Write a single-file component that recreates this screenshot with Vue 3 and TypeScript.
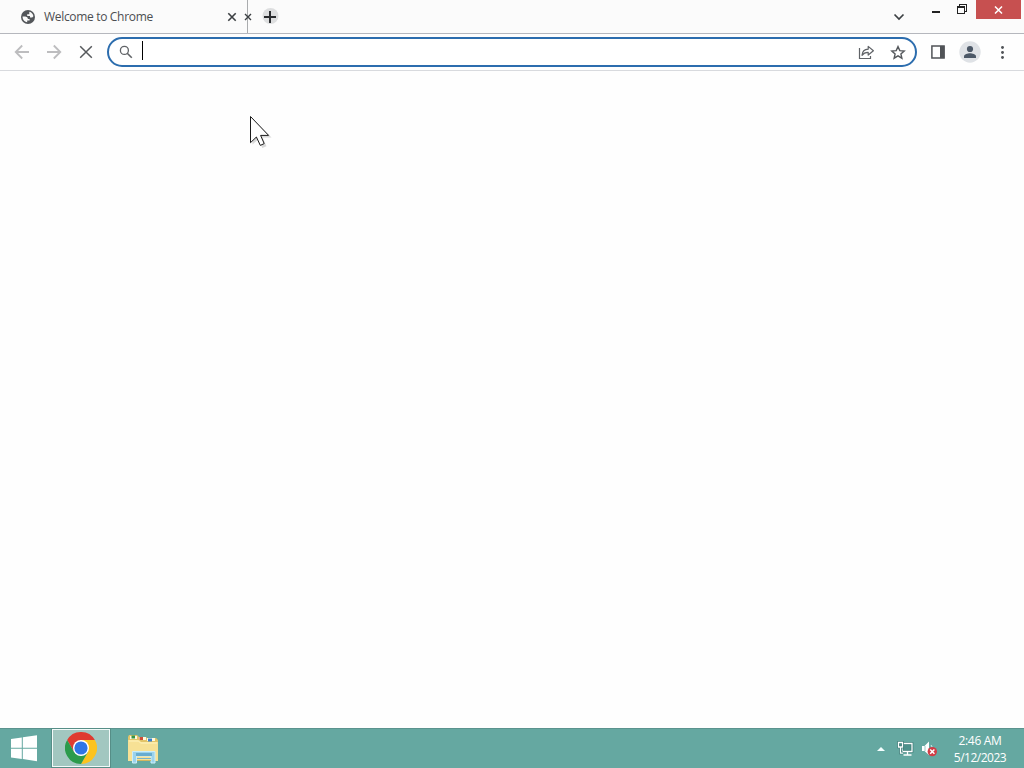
<script setup lang="ts">
import { ref } from 'vue'

const address = ref('')
const tabTitle = 'Welcome to Chrome'
const time = '2:46 AM'
const date = '5/12/2023'
</script>

<template>
  <div class="desktop">
    <header class="tabstrip">
      <div class="tab">
        <svg class="globe" width="14" height="14" viewBox="0 0 14 14">
          <circle cx="7" cy="7" r="7" fill="#53565a" />
          <path d="M1.6 6.6H4.3Q6.8 6.8 7 9H8.6V10.4H6.2V12.3C3.3 12 1.4 9.6 1.6 6.6Z" fill="#fafafa" />
          <path d="M8.3 1.7C10.6 2.2 12.2 4 12.4 6.3L11.2 7.6H9V6H6.2V4.2H8.3Z" fill="#fafafa" />
        </svg>
        <span class="title">{{ tabTitle }}</span>
        <svg class="close" width="10" height="10" viewBox="0 0 10 10">
          <path d="M1.3 1.3 8.7 8.7M8.7 1.3 1.3 8.7" stroke="#3c4043" stroke-width="1.6" />
        </svg>
      </div>
      <div class="divider">
        <svg class="close-small" width="8" height="8" viewBox="0 0 8 8">
          <path d="M1 1 7 7M7 1 1 7" stroke="#3c4043" stroke-width="1.4" />
        </svg>
      </div>
      <div class="newtab">
        <svg width="17" height="17" viewBox="0 0 17 17">
          <circle cx="8.5" cy="8" r="8" fill="#dddedf" />
          <path d="M2 9H14M8 3V15" stroke="#292b2e" stroke-width="2" />
        </svg>
      </div>
      <svg class="chevron" width="12" height="8" viewBox="0 0 12 8">
        <path d="M1.5 1.5 6 6 10.5 1.5" fill="none" stroke="#3c4043" stroke-width="1.7" />
      </svg>
      <div class="minimize"></div>
      <svg class="restore" width="10" height="10" viewBox="0 0 10 10" shape-rendering="crispEdges">
        <path d="M2 0H10V8H8V7H9V1H3V2H2Z" fill="#222" />
        <path fill-rule="evenodd" d="M0 2H8V10H0ZM1 4V9H7V4Z" fill="#222" />
      </svg>
      <div class="window-close">
        <svg width="9" height="8" viewBox="0 0 9 8">
          <path d="M1 .5 8 7.5M8 .5 1 7.5" stroke="#fff" stroke-width="1.5" />
        </svg>
      </div>
    </header>

    <nav class="toolbar">
      <svg class="back" width="16" height="16" viewBox="0 0 16 16">
        <path d="M15 8H2M8.2 1.5 1.7 8 8.2 14.5" fill="none" stroke="#bdbdbf" stroke-width="1.8" />
      </svg>
      <svg class="forward" width="16" height="16" viewBox="0 0 16 16">
        <path d="M1 8H14M7.8 1.5 14.3 8 7.8 14.5" fill="none" stroke="#bdbdbf" stroke-width="1.8" />
      </svg>
      <svg class="stop" width="14" height="14" viewBox="0 0 14 14">
        <path d="M1.2 1.2 12.8 12.8M12.8 1.2 1.2 12.8" stroke="#56595c" stroke-width="1.5" />
      </svg>
      <div class="omnibox">
        <svg class="search" width="14" height="14" viewBox="0 0 14 14">
          <circle cx="5.4" cy="5.4" r="4" fill="none" stroke="#606367" stroke-width="1.3" />
          <path d="M8.2 8.2 12.8 12.8" stroke="#606367" stroke-width="1.6" />
        </svg>
        <span class="caret"></span>
        <span class="address">{{ address }}</span>
        <svg class="share" width="17" height="15" viewBox="0 0 17 15">
          <path d="M1.5 3V13.5H12.5V11" fill="none" stroke="#606367" stroke-width="1.2" />
          <path d="M4 10.3C4.3 6.5 6.7 4.4 10.2 4.2V1.4L15.4 5.7 10.2 10V7.3C7.5 7.2 5.6 8.1 4 10.3Z" fill="none" stroke="#606367" stroke-width="1.2" stroke-linejoin="round" />
        </svg>
        <svg class="star" width="16" height="15" viewBox="0 0 16 15">
          <path d="M8 1.6 9.8 5.6 14.2 6 10.9 8.9 11.9 13.2 8 10.9 4.1 13.2 5.1 8.9 1.8 6 6.2 5.6Z" fill="none" stroke="#55585c" stroke-width="1.4" />
        </svg>
      </div>
      <svg class="panel" width="14" height="14" viewBox="0 0 14 14">
        <path d="M.9 .9H13.1V13.1H.9Z" fill="none" stroke="#505357" stroke-width="1.5" />
        <path d="M9 1H13.3V13H9Z" fill="#505357" />
      </svg>
      <svg class="profile" width="22" height="22" viewBox="0 0 22 22">
        <circle cx="11" cy="11" r="10.7" fill="#dfe2e6" />
        <circle cx="11" cy="8" r="3.1" fill="#4c5867" />
        <path d="M5 17V15.2C5 13.2 8.8 12.2 11 12.2S17 13.2 17 15.2V17Z" fill="#4c5867" />
      </svg>
      <svg class="menu" width="5" height="14" viewBox="0 0 5 14">
        <g fill="#505357">
          <circle cx="2.5" cy="2.5" r="1.45" />
          <circle cx="2.5" cy="7.5" r="1.45" />
          <circle cx="2.5" cy="12.5" r="1.45" />
        </g>
      </svg>
    </nav>

    <main class="page"></main>

    <footer class="taskbar">
      <svg class="start" width="28" height="27" viewBox="0 0 28 27">
        <path d="M1 4 11.8 2.5V12.7H1ZM12.8 2.3 27 .2V12.7H12.8ZM1 13.7H11.8V23.9L1 22.4ZM12.8 13.7H27V26.2L12.8 24.1Z" fill="#fff" />
      </svg>
      <div class="task-chrome">
        <svg width="32" height="32" viewBox="0 0 32 32">
          <path d="M2.14 8A16 16 0 0 1 29.86 8H16L9.07 20Z" fill="#df3b30" />
          <path d="M29.86 8A16 16 0 0 1 16 32L22.93 20 16 8Z" fill="#fcc31e" />
          <path d="M16 32A16 16 0 0 1 2.14 8L9.07 20 16 24 22.93 20Z" fill="#2b9b4b" />
          <circle cx="16" cy="16" r="8" fill="#fff" />
          <circle cx="16" cy="16" r="6.6" fill="#2f75e5" />
        </svg>
      </div>
      <svg class="task-folder" width="32" height="30" viewBox="0 0 32 30">
        <path d="M1 3 2 1H10L12 3H19L20 4H29L31 6V27H1Z" fill="#e3c468" />
        <path d="M3 2H10V5H3ZM12 3H19V6H12ZM20 4H28V7H20Z" fill="#fff9df" />
        <path d="M4.5 1.5H8V4.5H4.5Z" fill="#359447" />
        <path d="M12.5 3H16V6H12.5Z" fill="#cf4c36" />
        <path d="M21 4.5H25V7.5H21Z" fill="#377fce" />
        <path d="M1 6H12L14 8H31V27H1Z" fill="#f7e195" />
        <path d="M2 7H11.5L13.5 9H30" fill="none" stroke="#fff3bd" />
        <path d="M5.5 17.5H28V29H24V22H9.5V29H5.5Z" fill="#9bd2eb" stroke="#c9eefb" />
        <path d="M9 19H25V22H9Z" fill="#67acd0" />
        <path d="M10 24.5H24" stroke="#77b4cb" />
        <path d="M10 26.5H24" stroke="#d2b65e" />
      </svg>
      <svg class="tray-arrow" width="8" height="4" viewBox="0 0 8 4">
        <path d="M0 4 4 0 8 4Z" fill="#f4ffff" />
      </svg>
      <svg class="network" width="17" height="16" viewBox="0 0 17 16">
        <path d="M5 2.5H15V10.5H5Z" fill="#4f928c" stroke="#34736f" stroke-width="2.6" />
        <path d="M5 2.5H15V10.5H5ZM10.5 11V14M6.5 14H14.5" fill="none" stroke="#fff" stroke-width="1.3" />
        <path d="M1.5 1.5H5.5V6H1.5ZM3.5 6V12H6" fill="#4f928c" stroke="#34736f" stroke-width="2.6" />
        <path d="M1.5 1.5H5.5V6H1.5ZM3.5 6V12.2H6" fill="none" stroke="#fff" stroke-width="1.3" />
      </svg>
      <svg class="volume" width="17" height="16" viewBox="0 0 17 16">
        <path d="M1 5H3.5L8 .5V14L3.5 10H1Z" fill="#fff" />
        <path d="M4 5V10" stroke="#9ec5c1" />
        <path d="M10 4Q12 6 11 9" fill="none" stroke="#d5eeec" />
        <circle cx="11.3" cy="10.6" r="4.7" fill="#d13c45" />
        <path d="M9.2 8.5 13.4 12.7M13.4 8.5 9.2 12.7" stroke="#fff" stroke-width="1.5" />
      </svg>
      <div class="clock">
        <span class="time">{{ time }}</span>
        <span class="date">{{ date }}</span>
      </div>
    </footer>

    <svg class="cursor" width="26" height="34" viewBox="0 0 26 34">
      <path d="M3.5 3.5V29.5L9.3 24.2 13.3 33 17.5 31.3 13.6 22.6H22.5Z" fill="#555" opacity=".22" />
      <path d="M1.5 1.5V27.7L7.4 22 11.3 30.4 15.2 28.6 11.6 20.4H19.6Z" fill="#fff" stroke="#1b1b1b" stroke-width="1" />
    </svg>
  </div>
</template>

<style>
body {
  overflow: hidden;
}
</style>

<style scoped>
.desktop {
  position: relative;
  display: flex;
  flex-direction: column;
  width: 1024px;
  height: 768px;
  background: #fefefe;
  font-family: 'Open Sans', 'Noto Sans', sans-serif;
}
svg {
  display: block;
  flex: none;
}
.tabstrip {
  box-sizing: border-box;
  display: flex;
  align-items: flex-start;
  height: 34px;
  background: #fbfbfb;
  border-bottom: 1px solid #b5b7bd;
}
.tab {
  display: flex;
  align-items: center;
  box-sizing: border-box;
  width: 247px;
  height: 33px;
  padding: 0 10px 0 21px;
}
.title {
  flex: 1;
  margin-left: 9px;
  font-size: 12px;
  line-height: 16px;
  letter-spacing: -0.32px;
  color: #4c4e51;
  white-space: nowrap;
}
.divider {
  display: flex;
  align-items: center;
  width: 1px;
  height: 33px;
  background: #aaacae;
}
.close-small {
  margin-left: -3px;
}
.newtab {
  margin: 8px 0 0 14px;
}
.chevron {
  margin: 13px 0 0 auto;
}
.minimize {
  width: 8px;
  height: 2px;
  margin: 11px 0 0 27px;
  background: #222;
}
.restore {
  margin: 4px 0 0 17px;
}
.window-close {
  display: flex;
  align-items: center;
  justify-content: center;
  width: 45px;
  height: 19px;
  margin: 0 3px 0 9px;
  background: #c75050;
}
.toolbar {
  box-sizing: border-box;
  display: flex;
  align-items: center;
  height: 37px;
  padding-left: 14px;
  background: #fefefe;
  border-bottom: 1px solid #d8dade;
}
.forward {
  margin-left: 16px;
}
.stop {
  margin-left: 17px;
}
.omnibox {
  box-sizing: border-box;
  display: flex;
  align-items: center;
  width: 810px;
  height: 30px;
  margin-left: 14px;
  padding: 0 9px 0 10px;
  background: #fff;
  border: 2px solid #2c6dae;
  border-radius: 15px;
}
.caret {
  width: 1px;
  height: 19px;
  margin: 0 0 3px 9px;
  background: #000;
}
.address {
  flex: 1;
}
.star {
  margin-left: 15px;
}
.panel {
  margin-left: 14px;
}
.profile {
  margin-left: 14px;
}
.menu {
  margin-left: 19px;
}
.page {
  flex: 1;
}
.taskbar {
  box-sizing: border-box;
  display: flex;
  align-items: center;
  height: 40px;
  padding-left: 10px;
  background: #65a8a1;
  border-top: 1px solid #5b938e;
}
.start {
  margin-top: -1px;
}
.task-chrome {
  box-sizing: border-box;
  display: flex;
  align-items: center;
  justify-content: center;
  width: 58px;
  height: 38px;
  margin: -1px 1px 0 14px;
  background: #a2c7c0;
  border: 1px solid #f3faf9;
  box-shadow: 0 0 0 1px #568e87;
}
.task-folder {
  margin-left: 16px;
}
.tray-arrow {
  margin: 1px 0 0 auto;
}
.network {
  margin-left: 12px;
}
.volume {
  margin: 1px 0 0 7px;
}
.clock {
  display: flex;
  flex-direction: column;
  align-items: center;
  width: 60px;
  margin: 0 14px 0 12px;
  color: #fff;
  font-size: 12px;
  line-height: 17px;
  white-space: nowrap;
}
.time {
  letter-spacing: -0.3px;
}
.date {
  letter-spacing: -0.5px;
}
.cursor {
  position: absolute;
  left: 249px;
  top: 115px;
}
</style>
